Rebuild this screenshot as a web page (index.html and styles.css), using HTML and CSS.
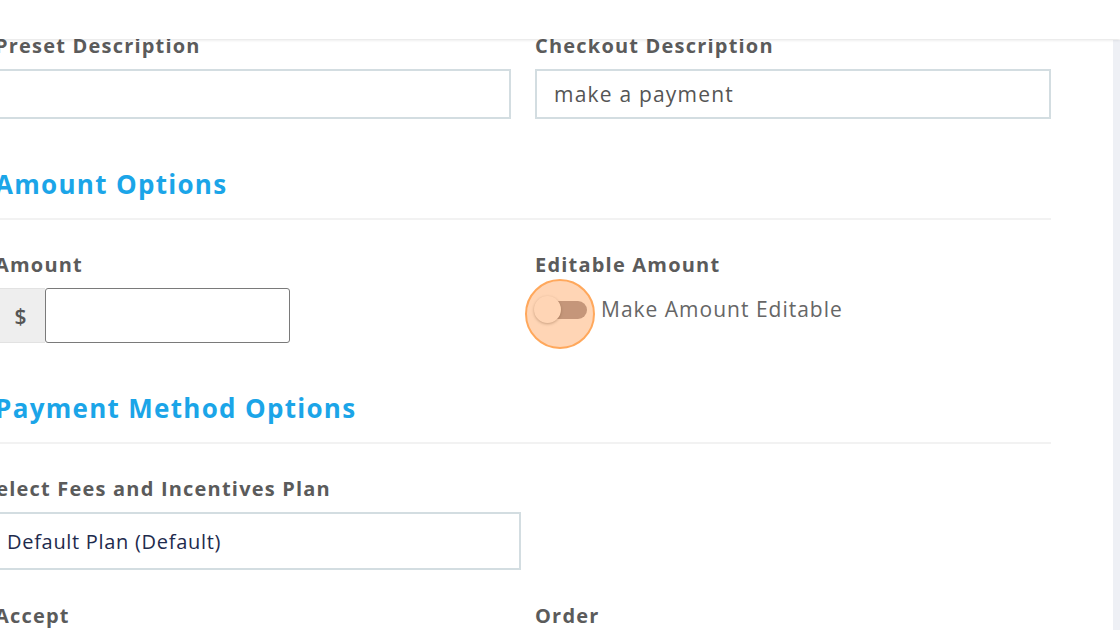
FILE: index.html
```html
<!DOCTYPE html>
<html lang="en">
<head>
    <meta charset="UTF-8">
    <meta name="viewport" content="width=device-width, initial-scale=1.0">
    <title>Payment Preset</title>
    <link rel="stylesheet" href="styles.css">
</head>
<body>

<div class="top-bar"></div>
<div class="side-track"></div>

<form class="preset-form">
    <div class="row">
        <div class="form-group">
            <label for="presetDescription">Preset Description</label>
            <input type="text" id="presetDescription" class="text-input">
        </div>
        <div class="form-group">
            <label for="checkoutDescription">Checkout Description</label>
            <input type="text" id="checkoutDescription" class="text-input" value="make a payment">
        </div>
    </div>

    <h3 class="section-title">Amount Options</h3>
    <hr class="divider">

    <div class="row">
        <div class="form-group">
            <label for="amount">Amount</label>
            <div class="input-group">
                <span class="addon">$</span>
                <input type="text" id="amount" class="amount-input">
            </div>
        </div>
        <div class="form-group">
            <label>Editable Amount</label>
            <div class="switch-row">
                <span class="switch">
                    <span class="switch-track"></span>
                    <span class="switch-knob"></span>
                    <span class="click-ring"></span>
                </span>
                <span class="switch-text">Make Amount Editable</span>
            </div>
        </div>
    </div>

    <h3 class="section-title">Payment Method Options</h3>
    <hr class="divider">

    <div class="form-group plan-group">
        <label for="plan" class="plan-label">Select Fees and Incentives Plan</label>
        <div class="select-box" id="plan">Default Plan (Default)</div>
    </div>

    <div class="row">
        <div class="form-group">
            <label>Accept</label>
        </div>
        <div class="form-group">
            <label>Order</label>
        </div>
    </div>
</form>

</body>
</html>
```

FILE: styles.css
```css
body {
    font-family: "Open Sans", Arial, sans-serif;
    background-color: #fff;
    margin: 0;
    height: 630px;
    overflow: hidden;
}
.top-bar {
    position: fixed;
    top: 0;
    left: 0;
    right: 0;
    height: 39px;
    background: #fff;
    box-shadow: 0 1px 3px rgba(0, 0, 0, 0.12);
    z-index: 5;
}
.side-track {
    position: fixed;
    top: 40px;
    right: 0;
    bottom: 0;
    width: 7px;
    background: #eef0f5;
}
.preset-form {
    margin-left: -5px;
    width: 1056px;
    padding-top: 34px;
}
.row {
    display: grid;
    grid-template-columns: 1fr 1fr;
    column-gap: 24px;
}
.form-group label {
    display: block;
    font-size: 20px;
    line-height: 24px;
    font-weight: 700;
    color: #5b5b5b;
    letter-spacing: 1.2px;
    margin-bottom: 11px;
}
.text-input {
    display: block;
    box-sizing: border-box;
    width: 100%;
    height: 50px;
    padding: 0 17px;
    border: 2px solid #d3dde1;
    font-family: inherit;
    font-size: 21px;
    color: #555;
    letter-spacing: 1.2px;
    outline: none;
}
.section-title {
    margin: 49px 0 18px;
    font-size: 26px;
    line-height: 32px;
    font-weight: 700;
    color: #1ba5e8;
    letter-spacing: 1.3px;
}
.divider {
    border: 0;
    border-top: 2px solid #f2f2f2;
    margin: 0 0 33px;
}
.input-group {
    display: flex;
    height: 55px;
}
.addon {
    width: 50px;
    display: flex;
    align-items: center;
    justify-content: center;
    box-sizing: border-box;
    background: #eeeeee;
    border: 1px solid #e2e2e2;
    border-right: 0;
    font-size: 21px;
    font-weight: 600;
    color: #555;
}
.amount-input {
    box-sizing: border-box;
    width: 245px;
    height: 55px;
    border: 1px solid #7a7a7a;
    border-radius: 3px;
    font-family: inherit;
    font-size: 19px;
    outline: none;
}
.switch-row {
    display: flex;
    align-items: center;
    height: 24px;
    margin-top: 20px;
    gap: 14px;
}
.switch {
    position: relative;
    width: 52px;
    height: 24px;
}
.switch-track {
    position: absolute;
    left: 5px;
    top: 4px;
    width: 47px;
    height: 18px;
    border-radius: 9px;
    background: #9e979d;
}
.switch-knob {
    position: absolute;
    left: -1px;
    top: -1px;
    width: 27px;
    height: 27px;
    border-radius: 50%;
    background: #fff;
    box-shadow: 0 1px 3px rgba(0, 0, 0, 0.35);
}
.click-ring {
    position: absolute;
    left: -10px;
    top: -18px;
    width: 66px;
    height: 66px;
    border-radius: 50%;
    background: rgba(255, 150, 70, 0.4);
    border: 2px solid #ffa85c;
}
.switch-text {
    font-size: 21px;
    color: #666;
    letter-spacing: 1px;
}
.plan-label {
    margin-left: -11px;
}
.select-box {
    box-sizing: border-box;
    width: 526px;
    height: 58px;
    display: flex;
    align-items: center;
    padding-left: 10px;
    border: 2px solid #d3dde1;
    font-size: 20px;
    color: #1e2b4d;
    letter-spacing: 0.7px;
}
.plan-group {
    margin-bottom: 34px;
}
```
